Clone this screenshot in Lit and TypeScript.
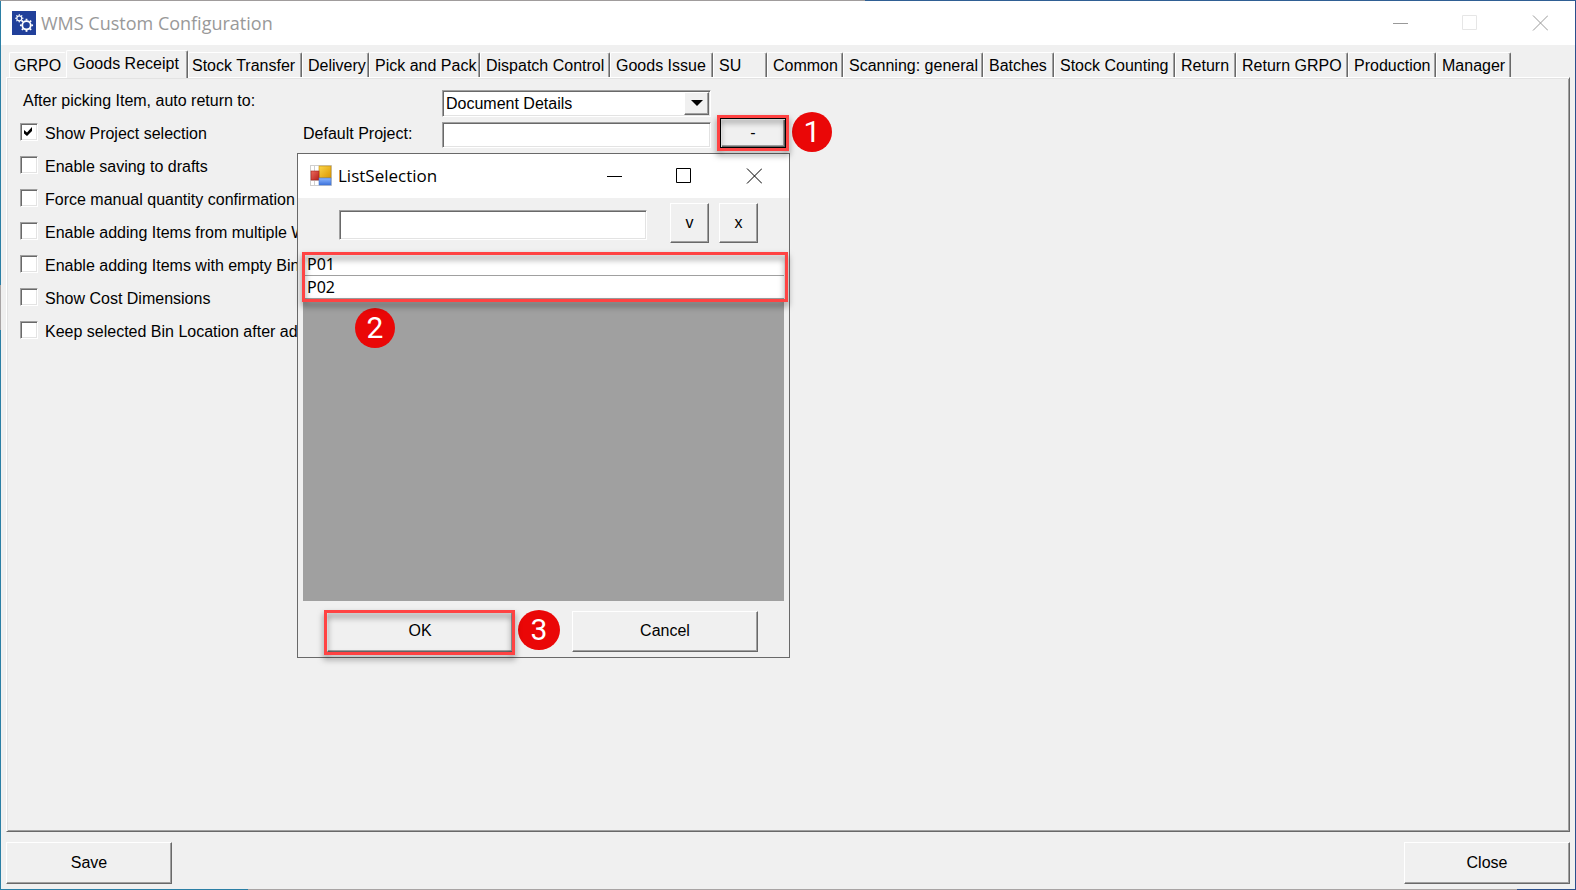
import { LitElement, html, css, svg } from "lit";
import { customElement, property, state } from "lit/decorators.js";

interface Tab {
  name: string;
  width: number;
}

const TABS: Tab[] = [
  { name: "GRPO", width: 57 },
  { name: "Goods Receipt", width: 122 },
  { name: "Stock Transfer", width: 114 },
  { name: "Delivery", width: 67 },
  { name: "Pick and Pack", width: 111 },
  { name: "Dispatch Control", width: 130 },
  { name: "Goods Issue", width: 103 },
  { name: "SU", width: 54 },
  { name: "Common", width: 76 },
  { name: "Scanning: general", width: 140 },
  { name: "Batches", width: 71 },
  { name: "Stock Counting", width: 121 },
  { name: "Return", width: 61 },
  { name: "Return GRPO", width: 112 },
  { name: "Production", width: 88 },
  { name: "Manager", width: 75 },
];

const OPTIONS = [
  { label: "Show Project selection", on: true },
  { label: "Enable saving to drafts", on: false },
  { label: "Force manual quantity confirmation", on: false },
  { label: "Enable adding Items from multiple WHs", on: false },
  { label: "Enable adding Items with empty Bin", on: false },
  { label: "Show Cost Dimensions", on: false },
  { label: "Keep selected Bin Location after add", on: false },
];

/* Classic raised and sunken edges, shared by every element. */
const classic = css`
  * {
    box-sizing: border-box;
  }
  button,
  input,
  select {
    font: inherit;
    color: inherit;
    margin: 0;
    border-radius: 0;
    outline: none;
  }
  .raised {
    position: relative;
    padding: 0;
    background: #f0f0f0;
    border: 1px solid;
    border-color: #fff #696969 #696969 #fff;
    box-shadow: inset -1px -1px #a0a0a0;
  }
  .sunken {
    padding: 0 2px;
    background: #fff;
    border: 1px solid;
    border-color: #a0a0a0 #fff #fff #a0a0a0;
    box-shadow: inset 1px 1px #696969, inset -1px -1px #e3e3e3;
  }
  .marked::after {
    content: "";
    position: absolute;
    z-index: 1;
    inset: -4px;
    border: 3px solid #ff4343;
    filter: drop-shadow(0 4px 3px rgba(0, 0, 0, 0.5));
    pointer-events: none;
  }
`;

@customElement("caption-buttons")
class CaptionButtons extends LitElement {
  @property({ type: Boolean }) inactive = false;

  static styles = css`
    :host {
      display: flex;
      align-self: stretch;
    }
    button {
      width: 70px;
      padding: 0;
      border: 0;
      background: none;
      display: flex;
      align-items: center;
      justify-content: center;
    }
    svg {
      display: block;
      width: 16px;
      height: 16px;
      fill: none;
      stroke: #000;
    }
    .dim svg {
      stroke: #999;
    }
    .dim .max svg {
      stroke: #e6e6e6;
    }
    .row {
      display: flex;
    }
  `;

  render() {
    const glyph = (d: string) =>
      html`<svg viewBox="0 0 16 16" aria-hidden="true">${svg`<path d=${d} />`}</svg>`;
    return html`<div class="row ${this.inactive ? "dim" : ""}">
      <button aria-label="Minimize">${glyph("M1 8.5H16")}</button>
      <button class="max" aria-label="Maximize">${glyph("M.5 .5H14.5V14.5H.5Z")}</button>
      <button aria-label="Close window">${glyph("M1 .5L16 15.5M16 .5L1 15.5")}</button>
    </div>`;
  }
}

@customElement("step-badge")
class StepBadge extends LitElement {
  @property() step = "";

  static styles = css`
    :host {
      display: flex;
      align-items: center;
      justify-content: center;
      width: 40px;
      height: 40px;
      border-radius: 50%;
      background: #ea0707;
      color: #fff;
      font: 30px/40px Roboto, "Liberation Sans", sans-serif;
    }
  `;

  render() {
    return html`${this.step}`;
  }
}

@customElement("list-selection")
class ListSelection extends LitElement {
  static styles = [
    classic,
    css`
      :host {
        display: flex;
        flex-direction: column;
        background: #f0f0f0;
        border: 1px solid #696969;
      }
      .title {
        display: flex;
        align-items: center;
        height: 44px;
        background: #fff;
        padding-left: 12px;
        font: 17px/24px "Open Sans", "Noto Sans", sans-serif;
      }
      .title svg {
        width: 22px;
        height: 22px;
        margin-right: 6px;
      }
      .title span {
        flex: 1;
      }
      .search {
        display: flex;
        align-items: center;
        gap: 10px;
        padding: 5px 31px 10px 41px;
      }
      .search input {
        flex: 1;
        min-width: 0;
        height: 30px;
        margin: 3px 13px 0 0;
      }
      .search button {
        width: 39px;
        height: 40px;
      }
      .list {
        flex: 1;
        margin: 0 5px;
        background: #a0a0a0;
      }
      .rows {
        position: relative;
      }
      .rows.marked::after {
        inset: -1px -4px -3px -1px;
      }
      table {
        width: 100%;
        border-collapse: separate;
        border-spacing: 0;
      }
      td {
        height: 23px;
        padding: 0 4px;
        background: #fff;
        border-bottom: 1px solid #a0a0a0;
        font: 16px/22px "Noto Sans", sans-serif;
      }
      .actions {
        display: flex;
        align-items: center;
        padding: 9px 31px 5px 29px;
      }
      .actions button {
        flex: none;
        width: 186px;
        height: 41px;
      }
      .actions .marked::after {
        inset: -2px -3px -4px -4px;
      }
      .actions step-badge {
        margin: 0 12px 2px 5px;
        width: 42px;
      }
    `,
  ];

  render() {
    return html`
      <div class="title">
        <svg viewBox="0 0 22 22" aria-hidden="true">
          <defs>
            <linearGradient id="y" x2="1" y2="1">
              <stop offset="0" stop-color="#fbd64a" />
              <stop offset="1" stop-color="#dc9600" />
            </linearGradient>
            <linearGradient id="r" x2="1" y2="1">
              <stop offset="0" stop-color="#ec6a5c" />
              <stop offset="1" stop-color="#b51f1a" />
            </linearGradient>
            <linearGradient id="b" x2="0" y2="1">
              <stop offset="0" stop-color="#8db8ff" />
              <stop offset="1" stop-color="#3c72dc" />
            </linearGradient>
          </defs>
          <rect x=".5" y=".5" width="21" height="20" fill="#fff" stroke="#cfcfcf" />
          <path d="M.5 15.5H9M4.5 15V21M4.5 0V6" stroke="#cfcfcf" />
          <rect x="9" y="1" width="12" height="12" fill="url(#y)" stroke="#c08a10" stroke-width=".6" />
          <rect x="1" y="6" width="8" height="9" fill="url(#r)" stroke="#a02018" stroke-width=".6" />
          <rect x="9" y="13" width="12" height="7" fill="url(#b)" stroke="#4a78cc" stroke-width=".6" />
        </svg>
        <span>ListSelection</span>
        <caption-buttons></caption-buttons>
      </div>
      <div class="search">
        <input class="sunken" type="text" aria-label="Search" />
        <button class="raised">v</button>
        <button class="raised">x</button>
      </div>
      <div class="list">
        <div class="rows marked">
          <table aria-label="Projects">
            <tbody>
              <tr><td>P01</td></tr>
              <tr><td>P02</td></tr>
            </tbody>
          </table>
        </div>
      </div>
      <div class="actions">
        <button class="raised marked">OK</button>
        <step-badge step="3"></step-badge>
        <button class="raised">Cancel</button>
      </div>
    `;
  }
}

@customElement("app-root")
class AppRoot extends LitElement {
  @state() private active = 1;

  static styles = [
    classic,
    css`
      :host {
        display: flex;
        position: relative;
        min-height: 100vh;
        box-sizing: border-box;
        padding: 1px;
        background:
          linear-gradient(90deg, #a09c9c 865px, #2f5f94 865px) top / 100% 1px no-repeat,
          linear-gradient(90deg, #2b7fa5 248px, #a8a4a4 248px 1517px, #2b4f8c 1517px) bottom / 100% 1px no-repeat,
          linear-gradient(#2b7fa5 285px, #a8a4a4 285px 330px, #2b7fa5 330px) left / 1px 100% no-repeat,
          #2b4f8c;
        color: #000;
        font: 16px/20px "Liberation Sans", Arial, sans-serif;
      }
      .window {
        flex: 1;
        min-width: 0;
        display: flex;
        flex-direction: column;
        background: #f0f0f0;
      }
      .title {
        display: flex;
        align-items: center;
        height: 44px;
        padding-left: 11px;
        background: #fff;
        color: #999;
        font: 18px/24px "Open Sans", "Noto Sans", sans-serif;
      }
      .title svg {
        width: 24px;
        height: 24px;
        margin-right: 5px;
      }
      .title span {
        flex: 1;
      }
      .tabs {
        display: flex;
        align-items: flex-end;
        height: 32px;
        padding-left: 8px;
      }
      .tab {
        flex: none;
        height: 25px;
        padding: 2px 0 0 5px;
        text-align: left;
        white-space: nowrap;
        background: none;
        border: 1px solid;
        border-width: 1px 1px 0 1px;
        border-color: #fff #696969 #fff #fff;
        border-radius: 2px 2px 0 0;
        box-shadow: inset -1px 0 #a0a0a0;
      }
      .tab.before {
        padding-left: 4px;
        border-right-color: transparent;
        box-shadow: none;
      }
      .tab.on {
        position: relative;
        height: 28px;
        margin-bottom: -1px;
        padding: 0 0 2px 6px;
        background: #f0f0f0;
      }
      .tab.on + .tab {
        padding-left: 3px;
      }
      .page {
        flex: 1;
        margin: 0 5px;
        padding: 11px 12px;
        border: 1px solid;
        border-color: #fff #696969 #696969 #fff;
        box-shadow: inset 1px 1px #e3e3e3, inset -1px -1px #a0a0a0;
      }
      .form {
        display: grid;
        grid-template-columns: 284px 139px 269px 66px 40px;
        grid-template-rows: 28px;
        grid-auto-rows: 33px;
        align-items: center;
      }
      .lead {
        grid-column: 1 / 3;
        padding: 0 0 4px 4px;
      }
      .combo {
        position: relative;
        display: flex;
      }
      .combo select {
        appearance: none;
        flex: 1;
        height: 27px;
        padding: 1px 3px 0;
      }
      .combo .drop {
        position: absolute;
        top: 2px;
        right: 2px;
        width: 25px;
        height: 23px;
        display: flex;
        align-items: center;
        justify-content: center;
        pointer-events: none;
      }
      .check {
        grid-column: 1;
        display: flex;
        align-items: center;
        gap: 7px;
        padding-left: 1px;
        white-space: nowrap;
      }
      .box {
        display: grid;
        margin-bottom: 4px;
      }
      .box input {
        grid-area: 1 / 1;
        appearance: none;
        width: 18px;
        height: 18px;
      }
      .box svg {
        grid-area: 1 / 1;
        width: 18px;
        height: 18px;
        visibility: hidden;
        pointer-events: none;
        position: relative;
      }
      .box input:checked + svg {
        visibility: visible;
      }
      .project {
        height: 26px;
        width: 100%;
        margin-top: 2px;
      }
      .pick {
        justify-self: end;
        width: 66px;
        height: 30px;
        margin: 0 -9px 2px 0;
        border-color: #000;
        box-shadow: inset 1px 1px #fff, inset -1px -1px #696969, inset -2px -2px #a0a0a0;
      }
      .form step-badge {
        margin: -6px 0 -2px 15px;
      }
      .footer {
        display: flex;
        justify-content: space-between;
        padding: 10px 5px 5px;
      }
      .footer button {
        width: 166px;
        height: 42px;
      }
      list-selection {
        position: absolute;
        left: 297px;
        top: 153px;
        width: 493px;
        height: 505px;
      }
      .second {
        position: absolute;
        left: 355px;
        top: 308px;
      }
    `,
  ];

  private gear(cx: number, cy: number, r: number, tooth: number) {
    const teeth = [0, 45, 90, 135, 180, 225, 270, 315];
    return svg`<g transform="translate(${cx} ${cy})">
      <circle r=${r} fill="none" stroke="#fff" stroke-width=${tooth} />
      ${teeth.map(
        (a) => svg`<rect x=${-tooth / 2} y=${-r - tooth * 1.3} width=${tooth} height=${tooth}
          fill="#fff" transform="rotate(${a})" />`
      )}
    </g>`;
  }

  private option(o: { label: string; on: boolean }) {
    return html`<label class="check">
      <span class="box">
        <input class="sunken" type="checkbox" .checked=${o.on} />
        <svg viewBox="0 0 18 18" aria-hidden="true">
          <path d="M4 7L7 9.5L12 4V8L7 13L4 10.5Z" fill="#000" />
        </svg>
      </span>
      ${o.label}
    </label>`;
  }

  render() {
    const [first, ...rest] = OPTIONS;
    return html`
      <div class="window">
        <div class="title">
          <svg viewBox="0 0 24 24" aria-hidden="true">
            <rect width="24" height="24" fill="#21409a" />
            ${this.gear(7.3, 7.3, 2.5, 1.2)} ${this.gear(14.5, 14.3, 4.2, 1.8)}
          </svg>
          <span>WMS Custom Configuration</span>
          <caption-buttons inactive></caption-buttons>
        </div>
        <div class="tabs" role="tablist">
          ${TABS.map(
            (t, i) => html`<button
              role="tab"
              class="tab ${i === this.active ? "on" : ""} ${i === this.active - 1 ? "before" : ""}"
              aria-selected=${i === this.active}
              style="width:${t.width}px"
              @click=${() => (this.active = i)}
            >${t.name}</button>`
          )}
        </div>
        <div class="page" role="tabpanel">
          <div class="form">
            <label class="lead" for="return-to">After picking Item, auto return to:</label>
            <div class="combo">
              <select id="return-to" class="sunken">
                <option>Document Details</option>
              </select>
              <span class="drop raised">
                <svg width="12" height="6" viewBox="0 0 12 6" aria-hidden="true">
                  <path d="M0 0H12L6 6Z" />
                </svg>
              </span>
            </div>
            ${this.option(first)}
            <label for="project">Default Project:</label>
            <input id="project" class="sunken project" type="text" />
            <button class="raised marked pick" aria-label="Choose project">-</button>
            <step-badge step="1"></step-badge>
            ${rest.map((o) => this.option(o))}
          </div>
        </div>
        <div class="footer">
          <button class="raised">Save</button>
          <button class="raised">Close</button>
        </div>
      </div>
      <list-selection role="dialog" aria-label="ListSelection"></list-selection>
      <step-badge class="second" step="2"></step-badge>
    `;
  }
}
